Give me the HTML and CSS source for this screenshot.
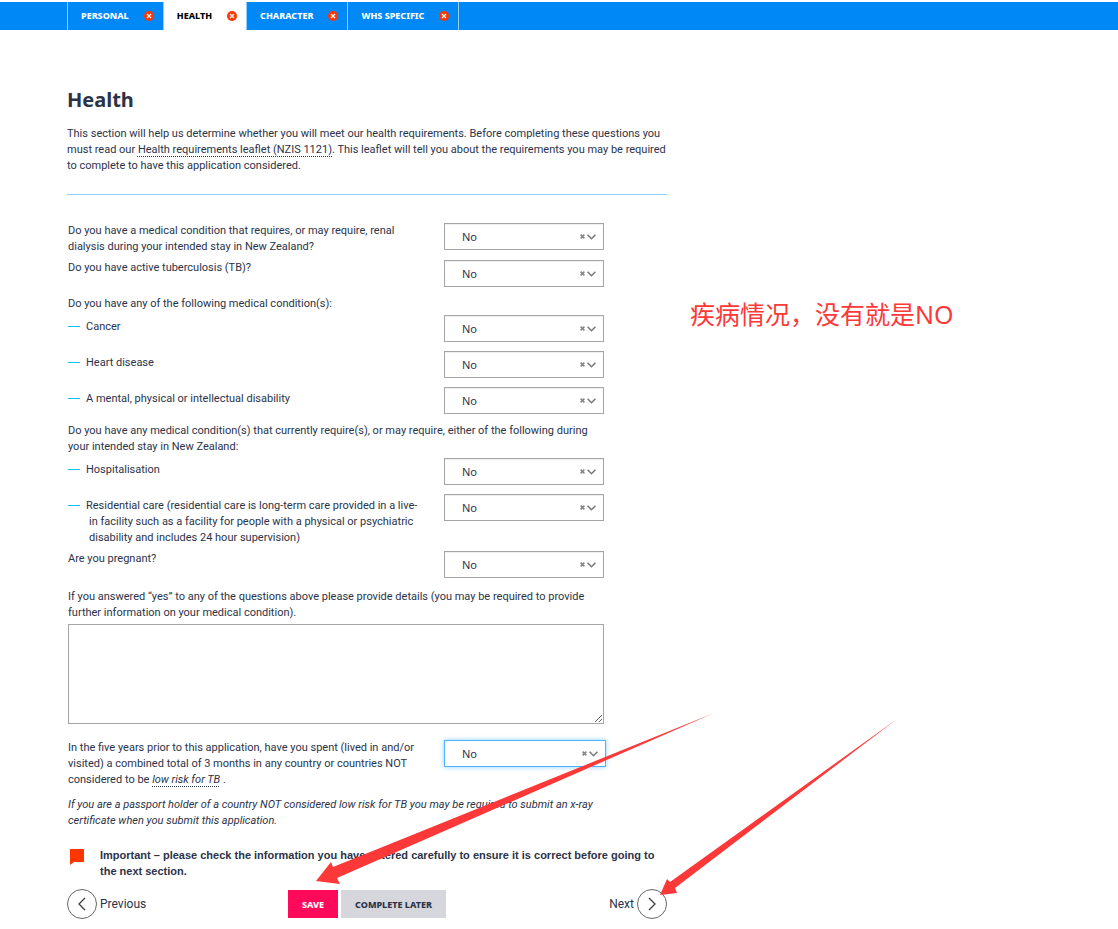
FILE: index.html
```html
<!DOCTYPE html>
<html lang="en">
<head>
<meta charset="UTF-8">
<meta name="viewport" content="width=device-width, initial-scale=1.0">
<title>Health</title>
<link rel="stylesheet" href="styles.css">
</head>
<body>

<!-- Shared icons -->
<svg class="sprite" aria-hidden="true">
    <symbol id="icon-error" viewBox="0 0 10 10">
        <circle cx="5" cy="5" r="5" fill="#ff3600"/>
        <path d="M3 3l4 4M7 3L3 7" stroke="#fff" stroke-width="1.2"/>
    </symbol>
    <symbol id="icon-clear" viewBox="0 0 5 5">
        <path d="M.6 .6l3.8 3.8M4.4 .6L.6 4.4" stroke="#888" stroke-width="1.6"/>
    </symbol>
    <symbol id="icon-down" viewBox="0 0 9 6">
        <path d="M.6 .8l3.9 4 3.9-4" fill="none" stroke="#777" stroke-width="1.5"/>
    </symbol>
</svg>

<nav class="tabs">
    <a href="#personal" class="tab">PERSONAL <svg class="tab-icon"><use href="#icon-error"/></svg></a>
    <a href="#health" class="tab active">HEALTH <svg class="tab-icon"><use href="#icon-error"/></svg></a>
    <a href="#character" class="tab">CHARACTER <svg class="tab-icon"><use href="#icon-error"/></svg></a>
    <a href="#whs" class="tab">WHS SPECIFIC <svg class="tab-icon"><use href="#icon-error"/></svg></a>
</nav>

<div class="page">
<main class="container">
    <h1>Health</h1>
    <p class="intro">This section will help us determine whether you will meet our health requirements. Before completing these questions you must read our <a href="#leaflet">Health requirements leaflet (NZIS 1121)</a>. This leaflet will tell you about the requirements you may be required to complete to have this application considered.</p>

    <form id="healthForm">
        <div class="row">
            <label for="renal">Do you have a medical condition that requires, or may require, renal dialysis during your intended stay in New Zealand?</label>
            <div class="select-box">
                <select id="renal" name="renal"><option>No</option><option>Yes</option></select>
                <button type="button" class="clear" aria-label="Clear"><svg><use href="#icon-clear"/></svg></button>
                <svg class="chevron"><use href="#icon-down"/></svg>
            </div>
        </div>
        <div class="row">
            <label for="tb">Do you have active tuberculosis (TB)?</label>
            <div class="select-box">
                <select id="tb" name="tb"><option>No</option><option>Yes</option></select>
                <button type="button" class="clear" aria-label="Clear"><svg><use href="#icon-clear"/></svg></button>
                <svg class="chevron"><use href="#icon-down"/></svg>
            </div>
        </div>

        <p class="group-title">Do you have any of the following medical condition(s):</p>
        <div class="row item">
            <label for="cancer">Cancer</label>
            <div class="select-box">
                <select id="cancer" name="cancer"><option>No</option><option>Yes</option></select>
                <button type="button" class="clear" aria-label="Clear"><svg><use href="#icon-clear"/></svg></button>
                <svg class="chevron"><use href="#icon-down"/></svg>
            </div>
        </div>
        <div class="row item">
            <label for="heart">Heart disease</label>
            <div class="select-box">
                <select id="heart" name="heart"><option>No</option><option>Yes</option></select>
                <button type="button" class="clear" aria-label="Clear"><svg><use href="#icon-clear"/></svg></button>
                <svg class="chevron"><use href="#icon-down"/></svg>
            </div>
        </div>
        <div class="row item">
            <label for="disability">A mental, physical or intellectual disability</label>
            <div class="select-box">
                <select id="disability" name="disability"><option>No</option><option>Yes</option></select>
                <button type="button" class="clear" aria-label="Clear"><svg><use href="#icon-clear"/></svg></button>
                <svg class="chevron"><use href="#icon-down"/></svg>
            </div>
        </div>

        <p class="group-title">Do you have any medical condition(s) that currently require(s), or may require, either of the following during your intended stay in New Zealand:</p>
        <div class="row item">
            <label for="hospital">Hospitalisation</label>
            <div class="select-box">
                <select id="hospital" name="hospital"><option>No</option><option>Yes</option></select>
                <button type="button" class="clear" aria-label="Clear"><svg><use href="#icon-clear"/></svg></button>
                <svg class="chevron"><use href="#icon-down"/></svg>
            </div>
        </div>
        <div class="row item">
            <label for="residential">Residential care (residential care is long-term care provided in a live-in facility such as a facility for people with a physical or psychiatric disability and includes 24 hour supervision)</label>
            <div class="select-box">
                <select id="residential" name="residential"><option>No</option><option>Yes</option></select>
                <button type="button" class="clear" aria-label="Clear"><svg><use href="#icon-clear"/></svg></button>
                <svg class="chevron"><use href="#icon-down"/></svg>
            </div>
        </div>

        <div class="row">
            <label for="pregnant">Are you pregnant?</label>
            <div class="select-box">
                <select id="pregnant" name="pregnant"><option>No</option><option>Yes</option></select>
                <button type="button" class="clear" aria-label="Clear"><svg><use href="#icon-clear"/></svg></button>
                <svg class="chevron"><use href="#icon-down"/></svg>
            </div>
        </div>

        <div class="details">
            <label for="details">If you answered “yes” to any of the questions above please provide details (you may be required to provide further information on your medical condition).</label>
            <textarea id="details" name="details"></textarea>
        </div>

        <div class="row">
            <label for="risk">In the five years prior to this application, have you spent (lived in and/or visited) a combined total of 3 months in any country or countries NOT considered to be <a href="#low-risk" class="term">low risk for TB</a> .</label>
            <div class="select-box focused">
                <select id="risk" name="risk"><option>No</option><option>Yes</option></select>
                <button type="button" class="clear" aria-label="Clear"><svg><use href="#icon-clear"/></svg></button>
                <svg class="chevron"><use href="#icon-down"/></svg>
            </div>
        </div>
        <p class="note">If you are a passport holder of a country NOT considered low risk for TB you may be required to submit an x-ray certificate when you submit this application.</p>

        <div class="important">
            <svg class="flag" viewBox="0 0 14 16"><path d="M0 0h14v13H4l-4 3z" fill="#ff3600"/></svg>
            <p>Important – please check the information you have entered carefully to ensure it is correct before going to the next section.</p>
        </div>

        <div class="buttons">
            <a href="#character" class="step prev">
                <svg viewBox="0 0 30 30"><circle cx="15" cy="15" r="14.5"/><path d="M18 9l-6 6 6 6"/></svg>
                Previous
            </a>
            <div class="actions">
                <button type="submit" class="save">SAVE</button>
                <button type="button" class="later">COMPLETE LATER</button>
            </div>
            <a href="#next" class="step next">
                Next
                <svg viewBox="0 0 30 30"><circle cx="15" cy="15" r="14.5"/><path d="M12 9l6 6-6 6"/></svg>
            </a>
        </div>
    </form>
</main>

<aside class="remark" lang="zh">疾病情况，没有就是NO</aside>
</div>

<!-- Hand-drawn arrows over the form -->
<svg class="arrows" viewBox="0 0 900 900" width="900" height="900" aria-hidden="true">
    <path d="M316 881l15-19 2 5L714 713 337 878l3 6z"/>
    <path d="M660 895l7-16 3 3L897 719 675 888l2 5z"/>
</svg>

</body>
</html>
```
FILE: styles.css
```css
body {
    font-family: Roboto, Arial, sans-serif;
    font-size: 11px;
    line-height: 16px;
    color: #2b3348;
    background-color: #fff;
    margin: 0;
    position: relative;
}
h1, p {
    margin: 0;
}
a {
    color: inherit;
    text-decoration: none;
}
.sprite {
    display: none;
}

/* Tabs */
.tabs {
    display: flex;
    height: 28px;
    margin-top: 2px;
    padding-left: 67px;
    background-color: #0088f7;
}
.tab {
    display: flex;
    align-items: center;
    gap: 15px;
    padding: 0 9px 0 13px;
    border-left: 1px solid #8fd0ff;
    font-family: "Noto Sans", sans-serif;
    font-size: 9px;
    font-weight: 800;
    color: #fff;
}
.tab:last-child {
    border-right: 1px solid #8fd0ff;
}
.tab.active {
    background-color: #fff;
    color: #000;
}
.tab-icon {
    width: 10px;
    height: 10px;
}

.page {
    display: flex;
    gap: 23px;
    padding: 58px 20px 10px 67px;
}
.container {
    flex: 0 1 600px;
}
h1 {
    font-family: "Noto Sans", sans-serif;
    font-size: 20px;
    line-height: 24px;
    margin-bottom: 14px;
}
.intro {
    padding-bottom: 20px;
    border-bottom: 1px solid #8fd0ff;
}
.intro a, .term {
    text-decoration: underline dotted 1px;
    text-underline-offset: 3px;
}
.term {
    font-style: italic;
}

/* Form */
form {
    padding-top: 28px;
}
.row {
    display: grid;
    grid-template-columns: 360px 160px;
    gap: 16px;
    margin: 0 0 5px 1px;
    min-height: 31px;
}
.select-box {
    position: relative;
    height: 27px;
}
select {
    appearance: none;
    width: 100%;
    height: 27px;
    padding: 0 40px 0 17px;
    border: 1px solid #a5a5a5;
    border-radius: 0;
    background-color: #fff;
    box-shadow: inset 0 1px 1px #eee;
    font: 11px "Noto Sans", sans-serif;
    color: #2b3348;
}
.focused {
    width: 162px;
}
.focused select {
    border-color: #4db2ff;
    box-shadow: 0 0 5px #8fd0ff;
}
.clear {
    position: absolute;
    right: 19px;
    top: 11px;
    width: 5px;
    height: 5px;
    padding: 0;
    border: 0;
    background: none;
}
.clear svg {
    display: block;
    width: 5px;
    height: 5px;
}
.chevron {
    position: absolute;
    right: 8px;
    top: 11px;
    width: 9px;
    height: 6px;
    pointer-events: none;
}
.group-title {
    padding: 0 60px 3px 1px;
}
.item label {
    padding: 4px 6px 0 21px;
    text-indent: -21px;
}
.item label::before {
    content: "";
    display: inline-block;
    width: 12px;
    height: 1px;
    margin-right: 6px;
    vertical-align: 3px;
    background-color: #00c3ff;
}
.details {
    padding: 2px 63px 0 1px;
    margin-bottom: 16px;
}
.details label {
    display: block;
    padding-right: 16px;
    margin-bottom: 3px;
}
textarea {
    display: block;
    box-sizing: border-box;
    width: 100%;
    height: 100px;
    border: 1px solid #a5a5a5;
}
.note {
    padding: 4px 60px 0 1px;
    font-style: italic;
}
.important {
    display: flex;
    gap: 16px;
    margin-top: 18px;
    padding-left: 3px;
    font-family: "Liberation Sans", Arial, sans-serif;
    font-weight: bold;
}
.flag {
    flex: none;
    width: 14px;
    height: 16px;
    margin-top: 2px;
}

/* Bottom buttons */
.buttons {
    display: grid;
    grid-template-columns: 221px 1fr auto;
    align-items: center;
    margin-top: 10px;
}
.step {
    display: flex;
    align-items: center;
    gap: 3px;
    font-size: 12px;
}
.step svg {
    width: 30px;
    height: 30px;
    fill: none;
    stroke: #666;
}
.step path {
    stroke: #444;
    stroke-width: 1.4;
}
.actions {
    display: flex;
    gap: 3px;
}
.actions button {
    height: 28px;
    padding: 0 14px;
    border: 0;
    font: 800 9px "Noto Sans", sans-serif;
}
.save {
    background-color: #ff0a5b;
    color: #fff;
}
.later {
    background-color: #d5d7dd;
    color: #2b3348;
}

.remark {
    margin-top: 210px;
    font-family: "Noto Sans", "Noto Sans CJK SC", sans-serif;
    font-size: 25px;
    line-height: 32px;
    color: #fd3838;
    white-space: nowrap;
}
.arrows {
    position: absolute;
    top: 0;
    left: 0;
    fill: #fd3838;
    pointer-events: none;
}
```
